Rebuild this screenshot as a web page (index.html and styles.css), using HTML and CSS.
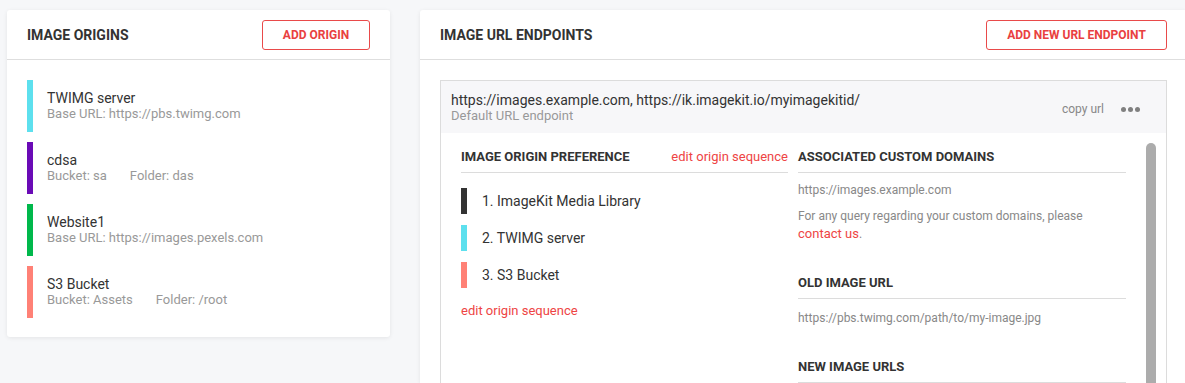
FILE: index.html
```html
<!DOCTYPE html>
<html>
<head>
<meta charset="utf-8">
<link rel="stylesheet" href="styles.css">
</head>
<body>
<div class="page">
  <section class="card card-origins">
    <header class="card-head">
      <h2 class="card-title">IMAGE ORIGINS</h2>
      <button class="btn-outline">ADD ORIGIN</button>
    </header>
    <div class="card-body origin-list">
      <div class="origin">
        <span class="bar bar-cyan"></span>
        <div class="origin-text">
          <div class="origin-name">TWIMG server</div>
          <div class="origin-sub">Base URL: https://pbs.twimg.com</div>
        </div>
      </div>
      <div class="origin">
        <span class="bar bar-purple"></span>
        <div class="origin-text">
          <div class="origin-name">cdsa</div>
          <div class="origin-sub"><span>Bucket: sa</span><span class="folder">Folder: das</span></div>
        </div>
      </div>
      <div class="origin">
        <span class="bar bar-green"></span>
        <div class="origin-text">
          <div class="origin-name">Website1</div>
          <div class="origin-sub">Base URL: https://images.pexels.com</div>
        </div>
      </div>
      <div class="origin">
        <span class="bar bar-salmon"></span>
        <div class="origin-text">
          <div class="origin-name">S3 Bucket</div>
          <div class="origin-sub"><span>Bucket: Assets</span><span class="folder">Folder: /root</span></div>
        </div>
      </div>
    </div>
  </section>

  <section class="card card-endpoints">
    <header class="card-head">
      <h2 class="card-title">IMAGE URL ENDPOINTS</h2>
      <button class="btn-outline">ADD NEW URL ENDPOINT</button>
    </header>
    <div class="card-body">
      <div class="endpoint">
        <div class="endpoint-head">
          <div class="endpoint-info">
            <div class="endpoint-url">https://images.example.com, https://ik.imagekit.io/myimagekitid/</div>
            <div class="endpoint-sub">Default URL endpoint</div>
          </div>
          <div class="endpoint-actions">
            <span class="copy">copy url</span>
            <span class="dots"><i></i><i></i><i></i></span>
          </div>
        </div>
        <div class="endpoint-panel">
          <div class="panel-cols">
            <div class="col">
              <div class="sec-head">
                <span>IMAGE ORIGIN PREFERENCE</span>
                <a class="red-link">edit origin sequence</a>
              </div>
              <div class="pref-list">
                <div class="pref"><span class="pbar bar-dark"></span>1. ImageKit Media Library</div>
                <div class="pref"><span class="pbar bar-cyan"></span>2. TWIMG server</div>
                <div class="pref"><span class="pbar bar-salmon"></span>3. S3 Bucket</div>
              </div>
              <a class="red-link edit-bottom">edit origin sequence</a>
            </div>
            <div class="col">
              <div class="sec-head"><span>ASSOCIATED CUSTOM DOMAINS</span></div>
              <div class="muted first">https://images.example.com</div>
              <p class="muted note">For any query regarding your custom domains, please <a class="red-link">contact us</a>.</p>
              <div class="sec-head sec-gap"><span>OLD IMAGE URL</span></div>
              <div class="muted url-line">https://pbs.twimg.com/path/to/my-image.jpg</div>
              <div class="sec-head sec-gap2"><span>NEW IMAGE URLS</span></div>
            </div>
          </div>
          <div class="scroll-track"><div class="scroll-thumb"></div></div>
        </div>
      </div>
    </div>
  </section>
</div>
</body>
</html>
```

FILE: styles.css
```css
* { box-sizing: border-box; }
html, body { margin: 0; padding: 0; }
body {
  background: #f6f7f9;
  font-family: Roboto, "Liberation Sans", Arial, sans-serif;
  color: #333;
  overflow: hidden;
  width: 1185px;
  height: 383px;
}
.page {
  display: flex;
  align-items: flex-start;
  gap: 30px;
  padding: 10px 0 0 7px;
}
.card {
  background: #fff;
  border-radius: 3px;
  box-shadow: 0 1px 4px rgba(0,0,0,0.08);
  flex: none;
}
.card-origins { width: 383px; }
.card-endpoints { width: 767px; height: 373px; overflow: hidden; border-radius: 3px 3px 0 0; }
.card-head {
  height: 50px;
  padding: 0 20px;
  display: flex;
  align-items: center;
  justify-content: space-between;
  border-bottom: 1px solid #dedede;
}
.card-title {
  margin: 0;
  font-size: 14px;
  font-weight: 700;
  color: #333;
}
.btn-outline {
  height: 30px;
  background: #fff;
  border: 1px solid #e94a4a;
  border-radius: 3px;
  color: #e94040;
  font-family: inherit;
  font-size: 12px;
  font-weight: 700;
  margin-top: 1px;
  padding: 0;
}
.card-origins .btn-outline { width: 108px; }
.card-endpoints .btn-outline { width: 181px; }
.card-body { padding: 20px 20px 19px; }
.origin-list { display: flex; flex-direction: column; gap: 10px; }
.origin { display: flex; height: 52px; align-items: center; }
.bar { width: 6px; height: 52px; flex: none; margin-right: 14px; }
.bar-cyan { background: #5de0ee; }
.bar-purple { background: #6a0ab6; }
.bar-green { background: #00b84b; }
.bar-salmon { background: #ff8176; }
.bar-dark { background: #333; }
.origin-name { font-size: 14px; line-height: 16px; color: #333; }
.origin-sub { font-size: 13px; line-height: 16px; color: #999; }
.folder { margin-left: 23px; }

.endpoint {
  border: 1px solid #dcdcdc;
  height: 320px;
}
.endpoint-head {
  background: #f7f7f9;
  height: 52px;
  padding: 11px 0 0 10px;
  display: flex;
  justify-content: space-between;
}
.endpoint-url { font-size: 14px; line-height: 16px; color: #333; }
.endpoint-sub { font-size: 13px; line-height: 15px; color: #999; }
.endpoint-actions {
  display: flex;
  align-items: center;
  height: 32px;
  padding-top: 2px;
  padding-right: 26px;
}
.copy { font-size: 12px; color: #888; margin-right: 17px; }
.dots { display: flex; gap: 2px; }
.dots i { display: block; width: 5px; height: 5px; border-radius: 50%; background: #808080; }
.endpoint-panel { display: flex; }
.panel-cols {
  flex: 1;
  display: grid;
  grid-template-columns: 327px 328px;
  column-gap: 10px;
  padding: 16px 20px 0 20px;
}
.scroll-track { width: 10px; margin: 10px 10px 0 0; }
.scroll-thumb { height: 260px; background: #acacac; border-radius: 5px 5px 0 0; }
.sec-head {
  display: flex;
  justify-content: space-between;
  align-items: center;
  font-size: 13px;
  font-weight: 700;
  line-height: 16px;
  padding-bottom: 7px;
  border-bottom: 1px solid #dcdcdc;
  color: #333;
}
.red-link { color: #ee4444; font-weight: 400; font-size: 13px; }
.note .red-link { font-size: 13px; }
.pref-list { display: flex; flex-direction: column; gap: 11px; margin-top: 15px; }
.pref { display: flex; align-items: center; height: 26px; font-size: 14px; color: #333; }
.pbar { width: 6px; height: 26px; margin-right: 15px; }
.edit-bottom { display: block; margin-top: 15px; line-height: 16px; }
.muted { font-size: 12px; color: #888; line-height: 16px; }
.first { margin-top: 9px; }
.note { margin: 9px 0 0; line-height: 18px; max-width: 300px; }
.sec-gap { margin-top: 32px; }
.url-line { margin-top: 11px; }
.sec-gap2 { margin-top: 33px; }
```
